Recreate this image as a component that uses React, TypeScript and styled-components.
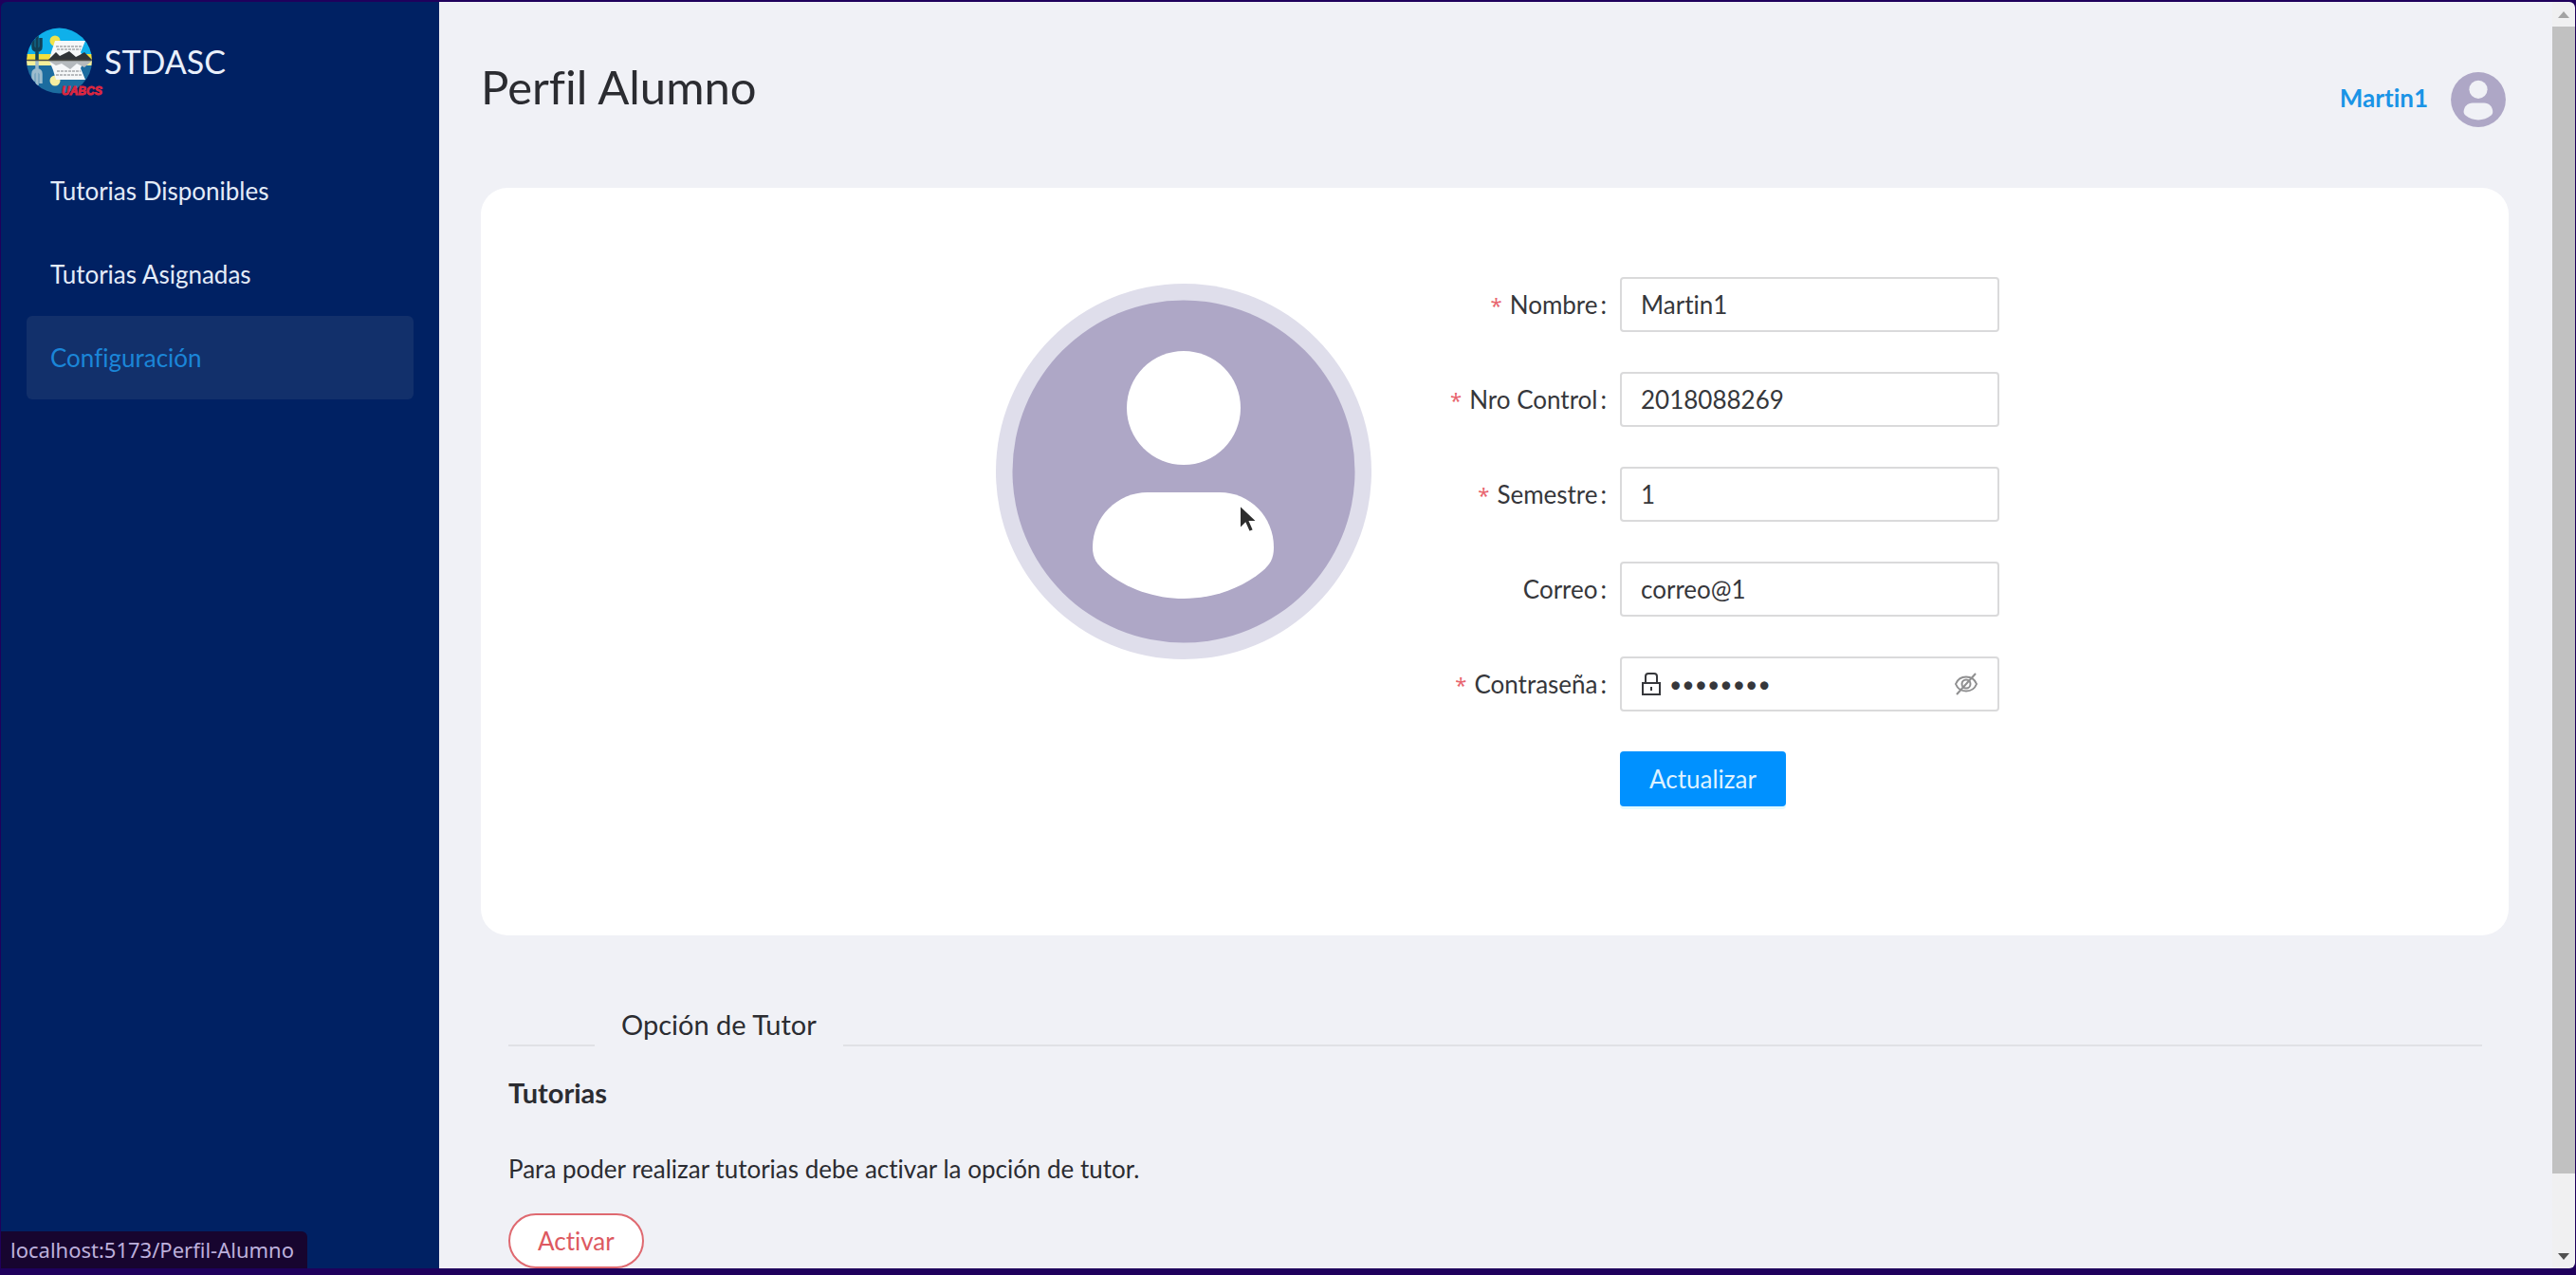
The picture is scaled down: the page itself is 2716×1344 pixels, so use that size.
import React from "react";
import styled, { createGlobalStyle } from "styled-components";

const GlobalStyle = createGlobalStyle`
  *, *::before, *::after { box-sizing: border-box; }
  body {
    margin: 0;
    background: #1f005c;
    font-family: Lato, "Open Sans", sans-serif;
    font-variant-ligatures: none;
    color: #2b2c31;
  }
  button, input { font: inherit; font-variant-ligatures: none; }
  h1, h2, h3, p { margin: 0; font-weight: 400; }
`;

const Window = styled.div`
  display: flex;
  height: 100vh;
  padding: 2px 1px 7px;
  background: #1f005c;
`;

const Sidebar = styled.aside`
  position: relative;
  flex: 0 0 462px;
  padding: 27px 27px 0;
  background: #002163;
  border-top-left-radius: 6px;
`;

const Brand = styled.div`
  display: flex;
  align-items: flex-start;
  height: 128px;
  color: #e9f0fb;
  font-size: 34px;
  line-height: 72px;
`;

const Nav = styled.nav`
  display: flex;
  flex-direction: column;
`;

const NavLink = styled.a<{ $active?: boolean }>`
  padding: 0 25px;
  border-radius: 6px;
  font-size: 26px;
  line-height: 88px;
  text-decoration: none;
  color: ${(p) => (p.$active ? "#1b86d8" : "#e3ebf8")};
  background: ${(p) => (p.$active ? "#12306b" : "transparent")};
`;

const StatusUrl = styled.div`
  position: absolute;
  left: 0;
  bottom: 0;
  padding: 0 14px 0 10px;
  border-top-right-radius: 6px;
  background: #17052f;
  color: #bdb0dc;
  font-family: "Noto Sans", sans-serif;
  font-size: 22px;
  line-height: 39px;
`;

const Main = styled.main`
  flex: 1;
  min-width: 0;
  overflow: hidden;
  padding: 0 46px 0 44px;
  background: #f0f1f6;
`;

const Header = styled.header`
  display: flex;
  justify-content: space-between;
  align-items: flex-start;
  height: 196px;
  padding: 60px 3px 0 0;
`;

const Title = styled.h1`
  font-size: 49px;
  line-height: 58px;
`;

const User = styled.div`
  display: flex;
  align-items: center;
  gap: 24px;
  padding-top: 14px;
`;

const UserLink = styled.a`
  padding-bottom: 4px;
  color: #1a94e6;
  font-size: 26px;
  font-weight: 700;
  text-decoration: none;
`;

const Card = styled.section`
  display: flex;
  justify-content: center;
  align-items: flex-start;
  padding: 94px 40px 136px 46px;
  border-radius: 28px;
  background: #ffffff;
`;

const Portrait = styled.div`
  position: relative;
  display: flex;
  padding-top: 7px;
`;

const Pointer = styled.svg`
  position: absolute;
  left: 254px;
  top: 237px;
`;

const Form = styled.form`
  display: grid;
  grid-template-columns: 262px 400px;
  row-gap: 42px;
`;

const Label = styled.label`
  display: flex;
  justify-content: flex-end;
  padding-right: 14px;
  font-size: 26px;
  line-height: 58px;
  color: #36373b;
`;

const Required = styled.span`
  margin-right: 8px;
  color: #e8656f;
  font-family: "Noto Sans", sans-serif;
  font-size: 22px;
`;

const Colon = styled.span`
  margin-left: 3px;
`;

const Field = styled.div`
  display: flex;
  align-items: center;
  gap: 8px;
  height: 58px;
  padding: 0 20px;
  border: 2px solid #dadadb;
  border-radius: 4px;
  background: #ffffff;
  color: #36373b;
`;

const Input = styled.input`
  flex: 1;
  min-width: 0;
  padding: 0;
  border: 0;
  outline: 0;
  background: transparent;
  color: inherit;
  font-size: ${(p) => (p.type === "password" ? "23px" : "26px")};
`;

const IconButton = styled.button`
  display: flex;
  padding: 0;
  border: 0;
  background: none;
  color: #8f8f90;
`;

const Submit = styled.button`
  grid-column: 2;
  justify-self: start;
  height: 58px;
  padding: 0 31px;
  border: 0;
  border-radius: 4px;
  background: #0091ff;
  box-shadow: 0 3px 0 #e2f9ff;
  color: #def2ff;
  font-size: 26px;
`;

const Tutor = styled.section`
  padding: 73px 28px 0 29px;
`;

const Divider = styled.div`
  display: flex;
  align-items: flex-end;
  gap: 28px;
`;

const Line = styled.span<{ $short?: boolean }>`
  flex: ${(p) => (p.$short ? "0 0 91px" : "1")};
  height: 2px;
  background: #e0e1e5;
`;

const DividerTitle = styled.h2`
  padding-bottom: 2px;
  font-size: 29px;
  line-height: 42px;
`;

const SubTitle = styled.h3`
  margin-top: 28px;
  font-size: 29px;
  font-weight: 700;
  line-height: 42px;
`;

const Text = styled.p`
  margin: 38px 0 26px;
  font-size: 26px;
  line-height: 42px;
`;

const Activate = styled.button`
  height: 58px;
  padding: 0 29px;
  border: 2px solid #df6970;
  border-radius: 29px;
  background: #ffffff;
  color: #dd5961;
  font-size: 26px;
`;

const Scrollbar = styled.div`
  display: flex;
  flex-direction: column;
  align-items: center;
  flex: 0 0 24px;
  background: #f0f0f1;
  border-radius: 0 6px 6px 0;
`;

const Thumb = styled.div`
  width: 100%;
  flex: 0 1 1209px;
  background: #c1c1c1;
`;

const Arrow = styled.svg`
  flex: none;
  margin: 10px 0 9px;
`;

const Spacer = styled.div`
  flex: 1 0 72px;
`;

const LogoText = styled.text`
  font-family: "Liberation Sans", sans-serif;
  font-size: 12px;
  font-weight: 700;
  font-style: italic;
`;

function Person({ size, ring, paper }: { size: number; ring?: boolean; paper: string }) {
  return (
    <svg width={size} height={size} viewBox={ring ? "0 0 396 396" : "17 17 362 362"} role="img" aria-label="Avatar">
      {ring && <circle cx="198" cy="198" r="198" fill="#dfdeeb" />}
      <circle cx="198" cy="198" r="180.5" fill="#aea7c6" />
      <circle cx="198" cy="131" r="60" fill={paper} />
      <path
        fill={paper}
        d="M160 220H236C268 220 293 246 293 278C293 290 289 296 281 303C258 322 228 332 198 332C168 332 138 322 115 303C107 296 102 290 102 278C102 246 128 220 160 220Z"
      />
    </svg>
  );
}

function Logo() {
  return (
    <svg width="82" height="76" viewBox="29 29 82 76" role="img" aria-label="UABCS">
      <defs>
        <clipPath id="disc"><circle cx="63.5" cy="64" r="34.5" /></clipPath>
      </defs>
      <g clipPath="url(#disc)">
        <rect x="28" y="28" width="72" height="30" fill="#0fb0ea" />
        <rect x="28" y="57" width="72" height="6" fill="#f2df3c" />
        <rect x="28" y="63" width="72" height="6" fill="#f5f09a" />
        <rect x="28" y="69" width="72" height="32" fill="#1c6c9f" />
        <path d="M40 63V38M36 42V49Q36 53 40 53Q44 53 44 49V40" fill="none" stroke="#123f55" strokeWidth="3.5" />
        <path d="M40 64V90M36 86V78Q36 74 40 74Q44 74 44 78V88" fill="none" stroke="#9dbccd" strokeWidth="3.5" />
        <circle cx="59" cy="43" r="5.5" fill="#f0e24a" />
        <circle cx="59" cy="85" r="5.5" fill="#f6efa0" />
        <path d="M59 43H91L86 55L90 63L86 72L91 84H60L57 74L53 64L55 55Z" fill="#f6f8f9" />
        <path d="M60 49H87M61 52H86M61 75H86M60 79H87" stroke="#a4a7ab" strokeWidth="1.5" strokeDasharray="3 1" />
        <path d="M52 63L60 55L64 59L74 54L81 60L85 58L90 55L98 63Z" fill="#303437" />
        <path d="M52 64L60 69L66 67L75 73L82 67L90 71L98 64Z" fill="#b5babd" />
        <path d="M28 63.5H99" stroke="#4b4d45" strokeWidth="1.5" />
      </g>
      <LogoText x="66" y="100" fill="#dc2740" stroke="#dc2740" strokeWidth="1">UABCS</LogoText>
    </svg>
  );
}

const fields = [
  { id: "nombre", label: "Nombre", value: "Martin1", required: true },
  { id: "control", label: "Nro Control", value: "2018088269", required: true },
  { id: "semestre", label: "Semestre", value: "1", required: true },
  { id: "correo", label: "Correo", value: "correo@1", required: false },
];

function FieldLabel({ id, text, required }: { id: string; text: string; required: boolean }) {
  return (
    <Label htmlFor={id}>
      {required && <Required>*</Required>}
      {text}
      <Colon>:</Colon>
    </Label>
  );
}

export default function App() {
  return (
    <>
      <GlobalStyle />
      <Window>
        <Sidebar>
          <Brand><Logo />STDASC</Brand>
          <Nav>
            <NavLink href="#disponibles">Tutorias Disponibles</NavLink>
            <NavLink href="#asignadas">Tutorias Asignadas</NavLink>
            <NavLink href="#perfil" $active>Configuración</NavLink>
          </Nav>
          <StatusUrl>localhost:5173/Perfil-Alumno</StatusUrl>
        </Sidebar>
        <Main>
          <Header>
            <Title>Perfil Alumno</Title>
            <User>
              <UserLink href="#perfil">Martin1</UserLink>
              <Person size={58} paper="#f0f1f6" />
            </User>
          </Header>
          <Card>
            <Portrait>
              <Person size={396} ring paper="#ffffff" />
              <Pointer width="24" height="36" viewBox="0 0 24 36" aria-hidden="true">
                <path d="M3 3V29L9 23L13 32L18 30L14 21H22Z" fill="#2d2d2d" stroke="#fff" strokeWidth="2" />
              </Pointer>
            </Portrait>
            <Form onSubmit={(e) => e.preventDefault()}>
              {fields.map((f) => (
                <React.Fragment key={f.id}>
                  <FieldLabel id={f.id} text={f.label} required={f.required} />
                  <Field><Input id={f.id} defaultValue={f.value} /></Field>
                </React.Fragment>
              ))}
              <FieldLabel id="clave" text="Contraseña" required />
              <Field>
                <svg width="22" height="26" viewBox="0 0 22 26" fill="none" stroke="currentColor" strokeWidth="2" aria-hidden="true">
                  <path d="M2 12H20V24H2ZM5 12V5Q5 2 8 2H14Q17 2 17 5V12M11 16V20" />
                </svg>
                <Input id="clave" type="password" defaultValue="martin12" />
                <IconButton type="button" aria-label="Mostrar contraseña">
                  <svg width="26" height="24" viewBox="0 0 26 24" fill="none" stroke="currentColor" strokeWidth="2" aria-hidden="true">
                    <path d="M2 12C6 2 20 2 24 12C20 22 6 22 2 12Z" />
                    <circle cx="13" cy="12" r="4.5" />
                    <path d="M3 23L23 1" />
                  </svg>
                </IconButton>
              </Field>
              <Submit type="submit">Actualizar</Submit>
            </Form>
          </Card>
          <Tutor>
            <Divider><Line $short /><DividerTitle>Opción de Tutor</DividerTitle><Line /></Divider>
            <SubTitle>Tutorias</SubTitle>
            <Text>Para poder realizar tutorias debe activar la opción de tutor.</Text>
            <Activate type="button">Activar</Activate>
          </Tutor>
        </Main>
        <Scrollbar aria-hidden="true">
          <Arrow width="12" height="7" viewBox="0 0 12 7"><path d="M0 7L6 0L12 7Z" fill="#a3a3a3" /></Arrow>
          <Thumb />
          <Spacer />
          <Arrow width="12" height="7" viewBox="0 0 12 7"><path d="M0 0H12L6 7Z" fill="#505050" /></Arrow>
        </Scrollbar>
      </Window>
    </>
  );
}
